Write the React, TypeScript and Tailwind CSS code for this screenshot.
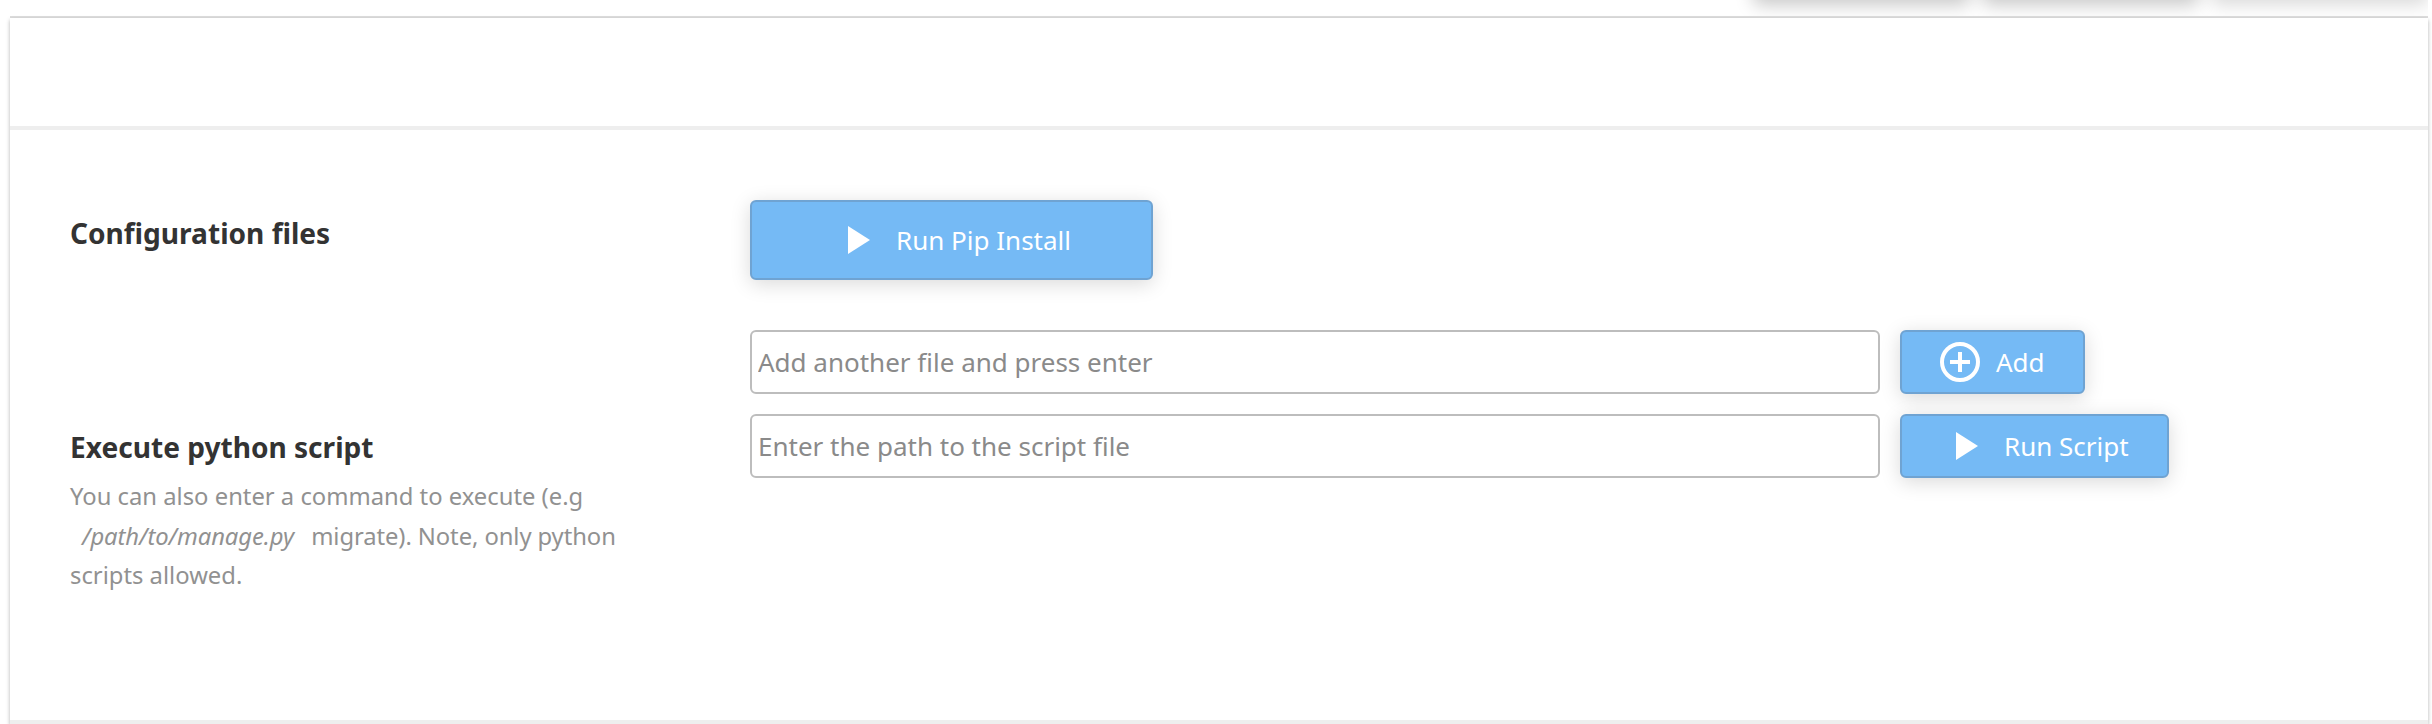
import type { ReactNode } from 'react';

const buttonBase =
  'flex shrink-0 items-center rounded-[6px] border-2 border-[#6fa3d2] bg-[#75baf5] text-[26px] text-white shadow-[0_4px_20px_rgba(0,0,0,0.15)]';

function PlayIcon() {
  return (
    <svg className="h-7 w-[22px] shrink-0" viewBox="0 0 22 28" fill="currentColor">
      <path d="M0 0 22 14 0 28Z" />
    </svg>
  );
}

function AddIcon() {
  return (
    <svg className="h-10 w-10 shrink-0" viewBox="0 0 40 40" fill="none" stroke="currentColor" strokeWidth="4">
      <circle cx="20" cy="20" r="18" />
      <path d="M20 10v20M10 20h20" />
    </svg>
  );
}

function Row({ label, children }: { label: ReactNode; children: ReactNode }) {
  return (
    <div className="flex items-start">
      <div className="w-[680px] shrink-0">{label}</div>
      <div className="flex gap-5">{children}</div>
    </div>
  );
}

const field =
  'h-16 w-[1130px] rounded-[6px] border-2 border-[#bdbdbd] bg-white px-1.5 text-[26px] text-[#333] placeholder:text-[#8a8a8a] placeholder:opacity-100';

const heading = 'text-[28.1px] leading-[42px] font-bold text-[#333]';

export default function App() {
  return (
    <div className="flex h-[724px] w-[2432px] flex-col overflow-hidden bg-white pr-1 pl-2.5 font-['Noto_Sans',sans-serif]">
      <div className="flex h-4 shrink-0 items-start justify-end gap-3 overflow-hidden">
        <div className="-mt-20 h-[79px] w-[217px] rounded-[6px] bg-white shadow-[0_6px_18px_rgba(0,0,0,0.22)]" />
        <div className="-mt-20 h-[79px] w-[217px] rounded-[6px] bg-white shadow-[0_6px_18px_rgba(0,0,0,0.22)]" />
        <div className="-mt-20 h-[79px] w-[217px] rounded-[6px] bg-white shadow-[0_6px_18px_rgba(0,0,0,0.15)]" />
      </div>
      <div className="h-0.5 shrink-0 bg-[#dddddd]" />
      <div className="flex min-h-0 flex-1 flex-col bg-white shadow-[0_2px_4px_rgba(0,0,0,0.3)]">
        <div className="h-[112px] shrink-0 border-b-4 border-[#eeeeee]" />
        <div className="flex flex-1 flex-col border-b-4 border-[#eeeeee] pt-[70px] pl-[60px]">
          <Row label={<h2 className={`pt-3 ${heading}`}>Configuration files</h2>}>
            <button className={`${buttonBase} h-20 w-[403px] pl-24`}>
              <PlayIcon />
              <span className="ml-[26px]">Run Pip Install</span>
            </button>
          </Row>
          <div className="mt-[50px] mb-5">
            <Row label={null}>
              <input className={field} placeholder="Add another file and press enter" />
              <button className={`${buttonBase} h-16 w-[185px] pl-[38px]`}>
                <AddIcon />
                <span className="ml-4">Add</span>
              </button>
            </Row>
          </div>
          <Row
            label={
              <div className="w-[560px] pt-3">
                <h2 className={heading}>Execute python script</h2>
                <p className="mt-[9px] text-[23.8px] leading-[39.5px] text-[#919191]">
                  You can also enter a command to execute (e.g
                  <br />
                  <span className="tracking-[-0.08px]">
                    <em className="mr-[11px] ml-3">/path/to/manage.py</em> migrate). Note, only python
                  </span>
                  <br />
                  scripts allowed.
                </p>
              </div>
            }
          >
            <input className={field} placeholder="Enter the path to the script file" />
            <button className={`${buttonBase} h-16 w-[269px] pl-[54px]`}>
              <PlayIcon />
              <span className="ml-[26px]">Run Script</span>
            </button>
          </Row>
        </div>
      </div>
    </div>
  );
}
